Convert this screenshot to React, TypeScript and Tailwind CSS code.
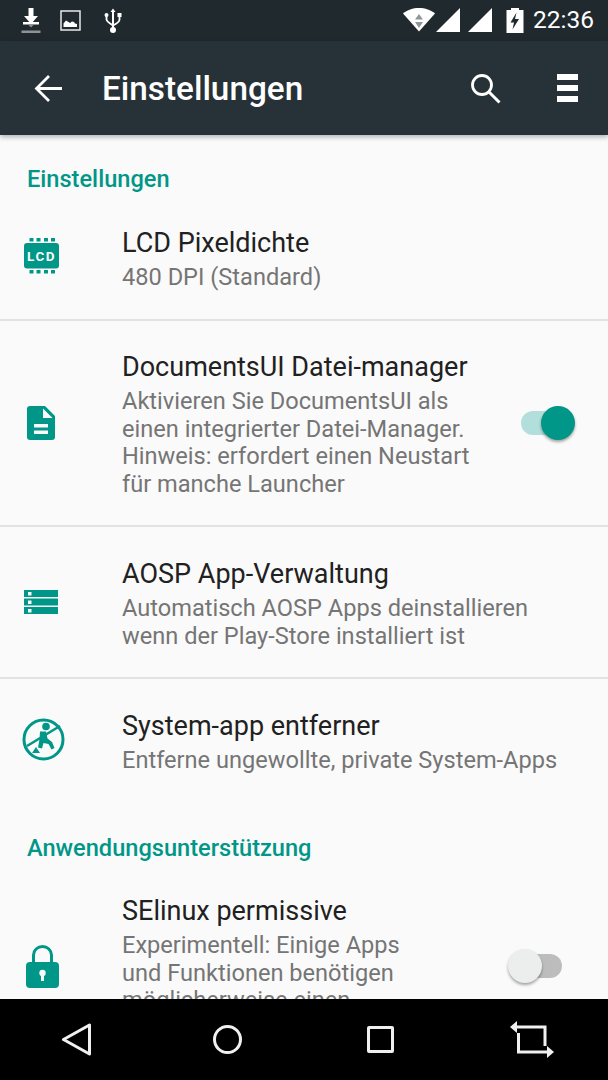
const teal = '#009688';

const DownloadIcon = () => (
  <svg width="20" height="26" viewBox="0 0 20 26" className="absolute left-[21px] top-[7px]">
    <path d="M7.5 1h5v8h4.5l-7 8-7-8h4.5z" fill="#fff" />
    <rect x="2" y="15" width="16" height="2.5" fill="#fff" />
    <path d="M7 17.5h6l-3 3z" fill="#8a8f92" />
    <rect x="0.500" y="23.500" width="19" height="2.500" fill="#8f9395" />
  </svg>
);

const ImageIcon = () => (
  <svg width="21" height="21" viewBox="0 0 21 21" className="absolute left-[60px] top-[10px]">
    <rect x="1" y="1" width="19" height="19" fill="none" stroke="#e8e8e8" strokeWidth="1.500" />
    <path d="M3.500 17v-3.500l2.500-3 2.500 1.500 1.500 1 2-1.500 2 .5 1 1.500 2 .5V17z" fill="#fff" />
  </svg>
);

const UsbIcon = () => (
  <svg width="18" height="26" viewBox="0 0 18 26" className="absolute left-[104px] top-[8px]">
    <path d="M9 0.500l2.500 3.500h-1.500v16h-2v-16h-1.500z" fill="#fff" />
    <circle cx="9" cy="22" r="3" fill="#fff" />
    <path d="M2.500 8v3.500c0 2 2.500 3.500 6.500 6 4-2 6.500-3.500 6.500-6v-3" fill="none" stroke="#fff" strokeWidth="1.800" />
    <circle cx="2.500" cy="7" r="2" fill="#fff" />
    <rect x="13.500" y="5" width="4" height="4" fill="#fff" />
  </svg>
);

const WifiIcon = () => (
  <svg width="32" height="24" viewBox="0 0 32 24" className="absolute left-[403px] top-[8px]">
    <path d="M0 5.500C4 2 10 0 16 0s12 2 16 5.500L16 23.500z" fill="#fff" />
    <path d="M16 6l4 5.500h-8z" fill="#8f9699" />
    <path d="M16 20l4-6h-8z" fill="#8f9699" />
  </svg>
);

const SignalIcon = ({ left }: { left: string }) => (
  <svg width="24" height="24" viewBox="0 0 24 24" className={left}>
    <path d="M24 0v24H0z" fill="#fff" />
  </svg>
);

const BatteryIcon = () => (
  <svg width="18" height="25" viewBox="0 0 18 25" className="absolute left-[506px] top-[8px]">
    <path d="M5 0h8v2h4.500v23H.5V2H5z" fill="#fff" />
    <path d="M10.500 4.500L4.500 14.500h3.500l-1.500 7 6.500-10.500H9z" fill="#20292d" />
  </svg>
);

const BackArrow = () => (
  <svg width="28" height="28" viewBox="0 0 28 28">
    <path d="M28 14.500H4M15 2L2.500 14.500 15 27" fill="none" stroke="#fff" strokeWidth="2.800" />
  </svg>
);

const SearchIcon = () => (
  <svg width="31" height="31" viewBox="0 0 31 31">
    <circle cx="12" cy="12" r="9.500" fill="none" stroke="#fff" strokeWidth="2.800" />
    <path d="M19 19l10.500 10.500" stroke="#fff" strokeWidth="3" />
  </svg>
);

const MenuIcon = () => (
  <div className="flex w-[21px] flex-col gap-[5px]">
    <div className="h-[6px] bg-white" />
    <div className="h-[6px] bg-white" />
    <div className="h-[6px] bg-white" />
  </div>
);

const LcdIcon = () => (
  <svg width="36" height="36" viewBox="0 0 36 36">
    <rect x="0" y="5" width="35" height="25.500" rx="3" fill={teal} />
    {[5.5, 12.5, 20, 27].map((x) => (
      <g key={x}>
        <rect x={x} y="0" width="4" height="3.500" fill={teal} />
        <rect x={x} y="32" width="4" height="3.500" fill={teal} />
      </g>
    ))}
    <text x="17.500" y="23" textAnchor="middle" fontFamily="Roboto, sans-serif" fontWeight="700" fontSize="13.500" letterSpacing="1.500" fill="#fafafa">LCD</text>
  </svg>
);

const FileIcon = () => (
  <svg width="28" height="34" viewBox="0 0 28 34">
    <path d="M3 0h15l10 10v21a3 3 0 0 1-3 3H3a3 3 0 0 1-3-3V3a3 3 0 0 1 3-3z" fill={teal} />
    <path d="M16 2.500V12h9.500z" fill="#fafafa" />
    <rect x="7" y="18" width="14" height="3.500" fill="#fafafa" />
    <rect x="7" y="24.500" width="14" height="3.500" fill="#fafafa" />
  </svg>
);

const ServerIcon = () => (
  <svg width="34" height="24" viewBox="0 0 34 24">
    {[0, 8.500, 17].map((y) => (
      <g key={y}>
        <rect x="0" y={y} width="34" height="7" fill={teal} />
        <rect x="4" y={y + 2} width="3.500" height="3.500" fill="#fafafa" />
      </g>
    ))}
  </svg>
);

const NoClimbIcon = () => (
  <svg width="43" height="43" viewBox="0 0 43 43">
    <circle cx="21.500" cy="21.500" r="19.500" fill="none" stroke={teal} strokeWidth="3" />
    <path d="M5 28L38 8" stroke={teal} strokeWidth="2.500" />
    <circle cx="24" cy="8.500" r="3.800" fill={teal} />
    <path d="M18 13.500h6l1.500 7 4.500 3.500 2.500 6-3 1.500-3-5.500-5-1-1.500 5.500-4-1 1.500-8z" fill={teal} />
    <path d="M14 29l4 6h-8z" fill={teal} />
  </svg>
);

const LockIcon = () => (
  <svg width="33" height="43" viewBox="0 0 33 43">
    <path d="M7.500 19v-9a9 8.500 0 0 1 18 0v9" fill="none" stroke={teal} strokeWidth="3" />
    <rect x="0" y="17" width="33" height="26" rx="4" fill={teal} />
    <circle cx="16.500" cy="28" r="3.200" fill="#fafafa" />
    <rect x="15" y="29" width="3" height="7" fill="#fafafa" />
  </svg>
);

const Switch = ({ on, className }: { on?: boolean; className?: string }) => (
  <div className={`relative h-[24px] w-[54px] shrink-0 ${className ?? ''}`}>
    <div className={`absolute top-0 h-[24px] w-[41px] rounded-full ${on ? 'left-0 bg-[#b2dfdb]' : 'left-[13px] bg-[#bdbdbd]'}`} />
    <div
      className={`absolute top-[-5px] h-[34px] w-[34px] rounded-full shadow-[0_2px_3px_rgba(0,0,0,0.35)] ${
        on ? 'left-[20px] bg-[#009688]' : 'left-0 bg-[#eceeee]'
      }`}
    />
  </div>
);

const Row = ({
  icon,
  title,
  lines,
  height,
  divider,
  titleTop,
  right,
}: {
  icon: React.ReactNode;
  title: string;
  lines: string[];
  height: string;
  divider?: boolean;
  titleTop: string;
  right?: React.ReactNode;
}) => (
  <div className={`flex shrink-0 ${height} ${divider ? 'border-b-2 border-[#e2e2e2]' : ''}`}>
    <div className="flex w-[122px] shrink-0 items-center">{icon}</div>
    <div className={`flex-1 ${titleTop}`}>
      <p className="text-[27px] leading-[30px] text-[#212121]">{title}</p>
      <div className="mt-[6px] text-[23.600px] leading-[27.500px] text-[#757575]">
        {lines.map((l) => (
          <p key={l} className="whitespace-nowrap">{l}</p>
        ))}
      </div>
    </div>
    {right}
  </div>
);

export default function App() {
  return (
    <div className="flex h-[1080px] w-[608px] flex-col overflow-hidden bg-[#fafafa] font-['Roboto',sans-serif]">
      {/* Status bar */}
      <div className="relative h-[41px] shrink-0 bg-[#20292d]">
        <DownloadIcon />
        <ImageIcon />
        <UsbIcon />
        <WifiIcon />
        <SignalIcon left="absolute left-[436px] top-[8px]" />
        <SignalIcon left="absolute left-[468px] top-[8px]" />
        <BatteryIcon />
        <span className="absolute right-[14px] top-[5px] text-[24.500px] leading-[30px] text-white">22:36</span>
      </div>

      {/* Toolbar */}
      <div className="z-10 flex h-[94px] shrink-0 items-center bg-[#263238] pl-[34px] pr-[30px] shadow-[0_2px_5px_rgba(0,0,0,0.3)]">
        <BackArrow />
        <h1 className="ml-[40px] flex-1 pt-[2px] text-[33.300px] font-medium leading-[40px] text-white">Einstellungen</h1>
        <SearchIcon />
        <div className="ml-[56px]">
          <MenuIcon />
        </div>
      </div>

      {/* Settings list */}
      <div className="min-h-0 flex-1 overflow-hidden">
        <div className="flex h-[75px] items-end pb-[17px] pl-[27px]">
          <h2 className="text-[23.600px] font-medium leading-[28px] text-[#009688]">Einstellungen</h2>
        </div>
        <Row
          icon={<span className="pb-[17px] pl-[24px]"><LcdIcon /></span>}
          title="LCD Pixeldichte"
          lines={['480 DPI (Standard)']}
          height="h-[111px]"
          titleTop="pt-[18px]"
          divider
        />
        <Row
          icon={<span className="pl-[27px]"><FileIcon /></span>}
          title="DocumentsUI Datei-manager"
          lines={[
            'Aktivieren Sie DocumentsUI als',
            'einen integrierter Datei-Manager.',
            'Hinweis: erfordert einen Neustart',
            'für manche Launcher',
          ]}
          height="h-[206px]"
          titleTop="pt-[31px]"
          divider
          right={<div className="flex items-center pr-[33px]"><Switch on /></div>}
        />
        <Row
          icon={<span className="pl-[24px]"><ServerIcon /></span>}
          title="AOSP App-Verwaltung"
          lines={['Automatisch AOSP Apps deinstallieren', 'wenn der Play-Store installiert ist']}
          height="h-[152px]"
          titleTop="pt-[32px]"
          divider
        />
        <Row
          icon={<span className="pl-[22px] pt-[6px]"><NoClimbIcon /></span>}
          title="System-app entferner"
          lines={['Entferne ungewollte, private System-Apps']}
          height="h-[115px]"
          titleTop="pt-[32px]"
        />
        <div className="flex h-[72px] items-end pb-[4px] pl-[27px]">
          <h2 className="text-[23.600px] font-medium leading-[28px] text-[#009688]">Anwendungsunterstützung</h2>
        </div>
        <Row
          icon={<span className="pl-[26px]"><LockIcon /></span>}
          title="SElinux permissive"
          lines={['Experimentell: Einige Apps', 'und Funktionen benötigen', 'möglicherweise einen']}
          height="h-[200px]"
          titleTop="pt-[30px]"
          right={<div className="flex items-center pr-[46px]"><Switch /></div>}
        />
      </div>

      {/* Navigation bar */}
      <div className="flex h-[81px] shrink-0 items-center bg-black">
        <div className="flex w-[304px] items-center pl-[61px]">
          <svg width="31" height="33" viewBox="0 0 31 33">
            <path d="M28.500 2v29L2.500 16.500z" fill="none" stroke="#f0f0f0" strokeWidth="3" strokeLinejoin="round" />
          </svg>
          <div className="ml-[121px] h-[29px] w-[29px] rounded-full border-[3px] border-[#f0f0f0]" />
        </div>
        <div className="flex items-center pl-[63px]">
          <div className="h-[27px] w-[27px] rounded-[2px] border-[3px] border-[#f0f0f0]" />
          <svg width="44" height="37" viewBox="0 0 44 37" className="ml-[116px]">
            <path d="M5 6h30v19M38 31H8.500V12" fill="none" stroke="#f0f0f0" strokeWidth="3" />
            <path d="M0 6l7-6v12z" fill="#f0f0f0" />
            <path d="M44 31l-7-6v12z" fill="#f0f0f0" />
          </svg>
        </div>
      </div>
    </div>
  );
}
